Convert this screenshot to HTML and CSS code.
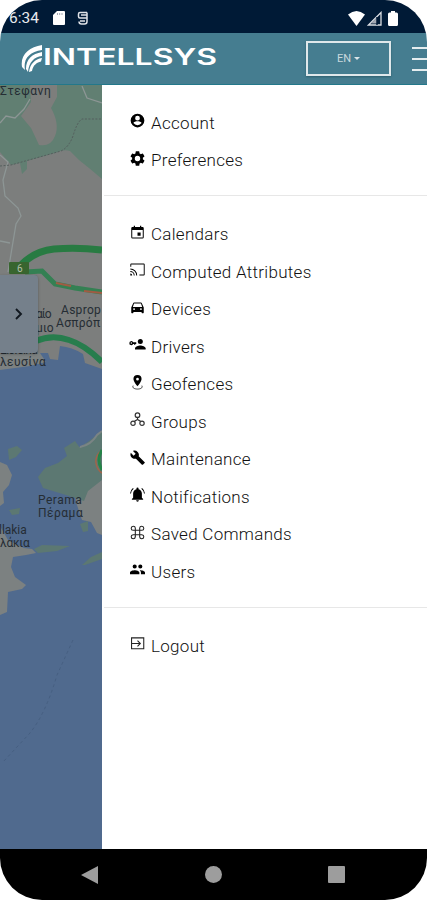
FILE: index.html
```html
<!DOCTYPE html>
<html lang="en">
<head>
<meta charset="UTF-8" />
<meta name="viewport" content="width=device-width, initial-scale=1" />
<title>Intellsys</title>
<link rel="stylesheet" href="styles.css">
</head>
<body>

<div class="phone">
  <div class="status-bar">
    <span class="clock">6:34</span>
    <svg class="sd" viewBox="0 0 12 14"><path d="M4 0h7a1 1 0 0 1 1 1v12a1 1 0 0 1-1 1H1a1 1 0 0 1-1-1V4z" fill="#fff"/><path d="M4.500 2v2M6.700 2v2M9 2v2" stroke="#8b92a0" stroke-width=".8"/></svg>
    <svg class="app" viewBox="0 0 12 14"><path d="M10 1.500H3Q1.500 1.500 1.500 3v2.500Q1.500 7 3 7h7M10 1.500v9q0 2.500-2.500 2.500h-3Q2 13 2 10.500M4 4h6M3 10h5" fill="none" stroke="#dfe2e7" stroke-width="1.500"/></svg>
    <div class="signals">
      <svg width="17" height="15" viewBox="0 0 17 15"><path d="M0 3.500Q8.500-3.500 17 3.500L8.500 15z" fill="#fff"/></svg>
      <svg width="15" height="15" viewBox="0 0 15 15"><path d="M1.500 14L14 1.500V14z" fill="none" stroke="#dcdfe4" stroke-width="1.300"/><path d="M4 12.500l6-6v6z" fill="#a4a9b3"/><path d="M10 6v8" stroke="#001a36" stroke-width="1.500"/></svg>
      <svg class="battery" width="10" height="15" viewBox="0 0 10 15"><path d="M3 0h4v1.500h1.500Q10 1.500 10 3v10.500Q10 15 8.500 15h-7Q0 15 0 13.500V3q0-1.500 1.500-1.500H3z" fill="#fff"/></svg>
    </div>
  </div>

  <header class="header">
    <svg class="logo" viewBox="0 0 200 34">
      <g fill="#fff">
        <path d="M21 3C8 5-1 13 1 25l3 3C2 17 8 10 21 8z"/>
        <path d="M21 10C11 12 5 17 5 27l2 3C8 20 13 15 21 14z"/>
        <path d="M21 16C14 17 9 22 8 30l3-1C12 23 16 20.500 20 19.500z"/>
      </g>
      <text x="22" y="22.800" textLength="174" lengthAdjust="spacingAndGlyphs">INTELLSYS</text>
    </svg>
    <button class="lang">EN <span class="caret"></span></button>
    <div class="burger"><i></i><i></i><i></i></div>
  </header>

  <main class="content">
    <div class="map">
      <svg class="map-canvas" viewBox="0 85 102 764">
        <rect y="85" width="102" height="764" fill="#7c7e7d"/>
        <path d="M0 85H102V179L89 168Q78 160 70 151Q63 149 55 153L27 161V169L22 174L20 163L11 165L0 152z" fill="#617f72"/>
        <path d="M21 116L31 102L30 85H57V97L51 108Q60 124 55 136Q51 147 39 145Q34 134 31 128z" fill="#7d7e7c"/>
        <path d="M0 123L6 116L15 118L24 109L30 99M0 155L8 162L3 180L5 196L18 208L21 216L16 224L8 272M82 86L87 98L102 103M0 241L10 243" fill="none" stroke="#8d9695" stroke-width="1.300"/>
        <path d="M0 166L11 165L61 151Q69 147 73 136Q77 122 82 119H102" fill="none" stroke="#555f5e" stroke-width="1" stroke-dasharray="2 1.500"/>
        <path d="M0 275H37V300H0z" fill="#747880"/>
        <path d="M0 353H48L50 359L58 360L60 346Q72 347 83 354L85 363L102 369V849H0z" fill="#506a8e"/>
        <g fill="#7c8181">
          <path d="M0 353H40L46 362L30 366L0 370z"/>
          <path d="M0 462L7 465L12 475L9 485L3 492L4 503L0 506z"/>
          <path d="M0 526L8 540L24 548L32 549L36 553L26 555L13 557L11 567L15 577L26 585L22 589L8 592L7 612L0 615z"/>
          <path d="M69 455L81 446L102 435V535L97 533L91 522L82 520L76 502z"/>
        </g>
        <g fill="#5c7872">
          <path d="M8 449L17 446L22 450L16 457L9 460z"/>
          <path d="M38 477L45 468L58 463L67 456L64 448L75 441L80 448L102 431V480L88 491L84 501L66 495L43 488z"/>
          <path d="M9 510L20 508L19 514L12 515z"/>
          <path d="M34 549L42 545L70 546L57 551L38 553zM82 565L91 557L102 552V559L85 565zM80 524L88 521L88 531L83 532z"/>
        </g>
        <path d="M80 447Q91 445 97 435L102 431" fill="none" stroke="#7b8485" stroke-width="2"/>
        <path d="M101 451Q95 456 96 463T102 473" fill="none" stroke="#a26449" stroke-width="1.500"/>
        <path d="M102 450Q96 460 102 470" fill="none" stroke="#258448" stroke-width="3"/>
        <path d="M20 266Q34 251 54 249Q77 247 102 250" fill="none" stroke="#287b42" stroke-width="7"/>
        <path d="M25 272L42 271L55 284L75 288L102 292" fill="none" stroke="#348053" stroke-width="5"/>
        <path d="M56 283L71 286M84 291L102 293" stroke="#a05b43" stroke-width="2"/>
        <path d="M36 341Q52 334 69 340Q85 345 102 362" fill="none" stroke="#277d4d" stroke-width="6"/>
        <path d="M73 640Q63 662 57 675Q46 713 30 733L3 762" fill="none" stroke="#465f81" stroke-width="1" stroke-dasharray="3 3"/>
        <rect x="9" y="262" width="20" height="12" rx="1" fill="#38652f"/>
        <g class="map-labels">
          <text x="17" y="272" class="route">6</text>
          <text x="0" y="95" textLength="51">Στεφανη</text>
          <text x="36" y="318" textLength="16">αίο</text>
          <text x="36" y="332" textLength="18">μιο</text>
          <text x="61" y="314">Asprop</text>
          <text x="56" y="327">Ασπρόπ</text>
          <text x="0" y="354" textLength="38">Elefsina</text>
          <text x="0" y="366" textLength="46">λευσίνα</text>
          <text x="38" y="504" textLength="44">Perama</text>
          <text x="38" y="517" textLength="45">Πέραμα</text>
          <text x="-1" y="534" textLength="28">llakia</text>
          <text x="0" y="547" textLength="30">λάκια</text>
        </g>
      </svg>
      <div class="drawer-toggle"><svg width="8" height="12" viewBox="0 0 8 12"><path d="M1 1l5 5-5 5" fill="none" stroke="#111820" stroke-width="1.900"/></svg></div>
    </div>

    <nav class="menu">
      <ul>
        <li><svg viewBox="0 0 24 24"><path d="M12 1a11 11 0 1 0 0 22 11 11 0 0 0 0-22zm0 3.500a3.800 3.800 0 1 1 0 7.600 3.800 3.800 0 0 1 0-7.600zm0 15a8 8 0 0 1-6.500-3.500c0-2 4.300-2.900 6.500-2.900s6.500.9 6.500 2.900a8 8 0 0 1-6.500 3.500z"/></svg><span>Account</span></li>
        <li><svg viewBox="2 2 20 20"><path d="M19.140 12.940c.04-.3.060-.61.060-.94s-.02-.64-.07-.94l2.030-1.580a.49.49 0 0 0 .12-.61l-1.920-3.320a.49.49 0 0 0-.59-.22l-2.390.96a7 7 0 0 0-1.620-.94l-.36-2.540a.48.48 0 0 0-.48-.41h-3.840a.47.47 0 0 0-.47.410l-.36 2.540c-.59.240-1.130.570-1.620.940l-2.390-.96a.48.48 0 0 0-.59.220L2.740 8.870a.47.47 0 0 0 .12.610l2.030 1.580a6 6 0 0 0 0 1.880l-2.030 1.580a.49.49 0 0 0-.12.610l1.920 3.320c.12.220.370.290.590.220l2.390-.96c.5.380 1.030.700 1.620.940l.36 2.540c.05.240.240.410.480.410h3.840c.24 0 .44-.17.470-.41l.36-2.540a7 7 0 0 0 1.620-.94l2.390.96c.22.080.470 0 .59-.22l1.920-3.320a.47.47 0 0 0-.12-.61zM12 15.600A3.600 3.600 0 1 1 12 8.400a3.600 3.600 0 0 1 0 7.200z"/></svg><span>Preferences</span></li>
      </ul>
      <ul>
        <li><svg viewBox="0 0 24 24"><path d="M17 12h-5v5h5zM16 1v2H8V1H6v2H4a2 2 0 0 0-2 2v14.500a2 2 0 0 0 2 2h16a2 2 0 0 0 2-2V5a2 2 0 0 0-2-2h-2V1zm4.400 19H3.600V8h16.800z"/></svg><span>Calendars</span></li>
        <li><svg viewBox="0 0 24 24"><path d="M22 2.500H2a1.500 1.500 0 0 0-1.500 1.500v3.500H2V4h20v16h-7v1.500h7a1.500 1.500 0 0 0 1.500-1.500V4A1.500 1.500 0 0 0 22 2.500zM.5 18.500v3h3a3 3 0 0 0-3-3zm0-4V16a5.500 5.500 0 0 1 5.500 5.500h1.500a7 7 0 0 0-7-7zm0-4V12a9.500 9.500 0 0 1 9.500 9.500h1.500a11 11 0 0 0-11-11z"/></svg><span>Computed Attributes</span></li>
        <li><svg viewBox="0 0 24 24"><path d="M18.920 5.010A1.500 1.500 0 0 0 17.500 4h-11c-.66 0-1.210.42-1.420 1.010L2 12v8c0 .55.450 1 1 1h1.500c.55 0 1-.45 1-1v-1h13v1c0 .55.450 1 1 1H21c.55 0 1-.45 1-1v-8zM6.500 16a1.500 1.500 0 1 1 0-3 1.500 1.500 0 0 1 0 3zm11 0a1.500 1.500 0 1 1 0-3 1.500 1.500 0 0 1 0 3zM4.500 11l2-5.500h11l2 5.500z"/></svg><span>Devices</span></li>
        <li><svg viewBox="0 0 24 24"><circle cx="16.500" cy="7" r="4"/><path d="M8 20v-2c0-2.700 5.500-4.500 8.500-4.500S25 15.300 25 18v2z"/><path d="M-1 9.500a3 3 0 0 1 5.800-1H10v2.500H8.500v1.500h-2V11H4.800A3 3 0 0 1-1 9.500zm2 0a1.100 1.100 0 1 0 2.200 0 1.100 1.100 0 0 0-2.200 0z"/></svg><span>Drivers</span></li>
        <li><svg viewBox="0 0 24 24"><path d="M12 0a6.500 6.500 0 0 0-6.500 6.500C5.500 11 12 18 12 18s6.500-7 6.500-11.500A6.500 6.500 0 0 0 12 0zm0 4.500a2.200 2.200 0 1 1 0 4.400 2.200 2.200 0 0 1 0-4.400z"/><path d="M5 17c-2 4 3 5.500 7 5.500s9-1.500 7-5.500" fill="none" stroke="#333" stroke-width="1.500"/></svg><span>Geofences</span></li>
        <li><svg viewBox="0 0 24 24"><g fill="none" stroke="#333" stroke-width="1.900"><circle cx="12" cy="5" r="3.700"/><circle cx="4.800" cy="18" r="3.500"/><circle cx="19.200" cy="18" r="3.500"/><path d="M12 9v3l-5 3M12 12l5 3"/></g></svg><span>Groups</span></li>
        <li><svg viewBox="0 0 24 24"><path d="M23.500 19.500l-9.600-9.600c.9-2.300.2-5-1.700-6.900-2-2-5-2.600-7.400-1.500L9 5.800 5.800 9 1.300 4.500C.1 7 .6 10.100 2.600 12.100c1.900 1.900 4.600 2.600 6.900 1.700l9.600 9.600c.4.400 1 .4 1.400 0l2.900-2.500c.5-.4.500-1 .1-1.400z"/></svg><span>Maintenance</span></li>
        <li><svg viewBox="0 0 24 24"><path d="M12 23.500a2.200 2.200 0 0 0 2.200-2.200H9.800a2.200 2.200 0 0 0 2.200 2.200zm7-6.500v-6.500c0-3.500-2.300-6.100-5.300-6.800V2.500a1.700 1.700 0 0 0-3.400 0v1.200C7.300 4.400 5 7 5 10.500V17l-2 2v1.300h18V19zM5.900 2.600L4.700 1.400A12 12 0 0 0 0 10.500h1.600a10.500 10.500 0 0 1 4.300-7.900zM22.400 10.500H24a12 12 0 0 0-4.700-9.100l-1.200 1.200a10.500 10.500 0 0 1 4.300 7.900z"/></svg><span>Notifications</span></li>
        <li><svg viewBox="0 0 24 24"><path d="M8.500 8.500h7v7h-7zM8.500 8.500H5A3.300 3.300 0 1 1 8.500 5zM15.500 8.500V5A3.300 3.300 0 1 1 19 8.500zM15.500 15.500H19a3.300 3.300 0 1 1-3.500 3.500zM8.500 15.500V19A3.300 3.300 0 1 1 5 15.500z" fill="none" stroke="#222" stroke-width="1.700"/></svg><span>Saved Commands</span></li>
        <li><svg viewBox="0 0 24 24"><path d="M16.500 10.500a3.300 3.300 0 1 0 0-6.600 3.300 3.300 0 0 0 0 6.600zm-9 0a3.300 3.300 0 1 0 0-6.600 3.300 3.300 0 0 0 0 6.600zm0 2.500C5 13 0 14.200 0 16.700V19.500h15v-2.800C15 14.200 10 13 7.500 13zm9 0l-1 .1c1.300.9 2 2 2 3.500v2.900H24v-2.800c0-2.500-5-3.700-7.500-3.700z"/></svg><span>Users</span></li>
      </ul>
      <ul>
        <li><svg viewBox="0 0 24 24"><path d="M2.500 8.500V3h19.500v17.500h-19.500V15M2 12h14M12 7.500l4.500 4.500-4.500 4.500M2.500 8v8" fill="none" stroke="#222" stroke-width="1.700"/></svg><span>Logout</span></li>
      </ul>
    </nav>
  </main>

  <footer class="nav-bar">
    <svg width="17" height="18" viewBox="0 0 17 18"><path d="M0 9L17 0v18z"/></svg>
    <svg width="17" height="17" viewBox="0 0 17 17"><circle cx="8.500" cy="8.500" r="8.500"/></svg>
    <svg width="17" height="17" viewBox="0 0 17 17"><rect width="17" height="17" rx="1"/></svg>
  </footer>
</div>

</body>
</html>
```

FILE: styles.css
```css
* {
  box-sizing: border-box;
}
body {
  margin: 0;
  background: #fff;
  font-family: Roboto, sans-serif;
}
svg {
  display: block;
  flex-shrink: 0;
}
.phone {
  width: 427px;
  height: 900px;
  display: flex;
  flex-direction: column;
  overflow: hidden;
  border-radius: 42px;
}
.status-bar {
  height: 33px;
  flex-shrink: 0;
  display: flex;
  align-items: center;
  padding: 3px 29px 0 9px;
  background: #001a36;
  color: #e8eaee;
}
.clock {
  width: 44px;
  font-size: 15.500px;
}
.sd {
  width: 12px;
  height: 14px;
}
.app {
  width: 12px;
  height: 14px;
  margin-left: 12px;
}
.signals {
  display: flex;
  align-items: center;
  gap: 2px;
  margin-left: auto;
}
.battery {
  margin-left: 4px;
}
.header {
  height: 52px;
  flex-shrink: 0;
  display: flex;
  align-items: center;
  padding-left: 21px;
  background: #457d90;
  border-bottom: 1px solid #23788a;
}
.logo {
  width: 200px;
  height: 34px;
}
.logo text {
  font-family: Inter, sans-serif;
  font-size: 22.500px;
  font-weight: 600;
  fill: #fff;
}
.lang {
  width: 85px;
  height: 35px;
  flex-shrink: 0;
  margin-left: 85px;
  display: flex;
  align-items: center;
  justify-content: center;
  gap: 3px;
  padding: 0;
  background: none;
  border: 2px solid #dfe8eb;
  box-shadow: 0 1px 2px #2d5f6e;
  color: #c9d9de;
  font-family: Roboto, sans-serif;
  font-size: 11px;
}
.caret {
  border: 3.500px solid transparent;
  border-top-color: #dbe6e9;
  border-bottom: 0;
}
.burger {
  width: 24px;
  margin-left: 21px;
  flex-shrink: 0;
  display: flex;
  flex-direction: column;
  gap: 9px;
}
.burger i {
  height: 2px;
  background: #e4edef;
}
.content {
  flex: 1;
  min-height: 0;
  display: flex;
}
.map {
  position: relative;
  width: 102px;
  flex-shrink: 0;
}
.map-canvas {
  width: 102px;
  height: 764px;
}
.map-labels {
  font-size: 12px;
  letter-spacing: 0.3px;
  fill: #252d34;
}
.map-labels .route {
  font-size: 10px;
  fill: #b3c0ab;
}
.drawer-toggle {
  position: absolute;
  top: 190px;
  left: 0;
  width: 38px;
  height: 78px;
  display: flex;
  align-items: center;
  justify-content: center;
  background: #75808b;
  border-radius: 0 4px 4px 0;
  box-shadow: 0 1px 3px rgba(0, 0, 0, 0.3);
}
.menu {
  flex: 1;
  padding-left: 2px;
  background: #fff;
}
.menu ul {
  margin: 0;
  padding: 18.800px 0 16.700px 26px;
  list-style: none;
}
.menu ul + ul {
  border-top: 1.500px solid #e7e7e7;
}
.menu li {
  height: 37.500px;
  display: flex;
  align-items: center;
}
.menu li svg {
  width: 15px;
  height: 15px;
  margin: -4px 6px 0 0;
  overflow: visible;
}
.menu li span {
  font-size: 17px;
  font-weight: 300;
  letter-spacing: 0.3px;
  color: #111;
}
.nav-bar {
  height: 51px;
  flex-shrink: 0;
  display: flex;
  align-items: center;
  justify-content: space-between;
  padding: 0 82px 0 81px;
  background: #000;
  fill: #9d9d9d;
}
```
